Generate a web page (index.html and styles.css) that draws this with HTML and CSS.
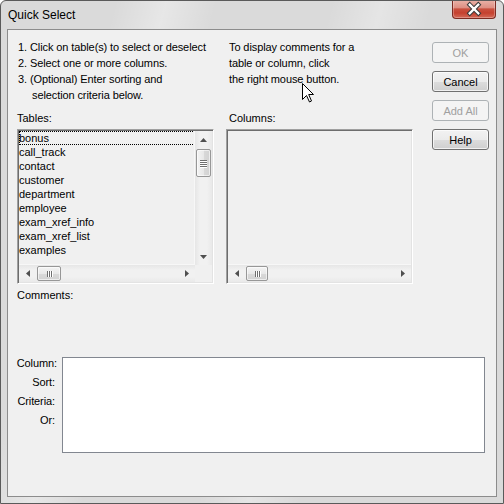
FILE: index.html
```html
<!DOCTYPE html>
<html>
<head>
<meta charset="utf-8">
<title>Quick Select</title>
<link rel="stylesheet" href="styles.css">
</head>
<body>
<div class="window">
  <div class="titlebar">
    <span class="title">Quick Select</span>
    <div class="close">
      <svg width="44" height="19" viewBox="0 0 44 19">
        <path d="M17.5 5.5 L26.5 14.5 M26.5 5.5 L17.5 14.5" stroke="#3b3b3b" stroke-width="4.6" stroke-linecap="square" fill="none"/>
        <path d="M17.5 5.5 L26.5 14.5 M26.5 5.5 L17.5 14.5" stroke="#ffffff" stroke-width="2.4" stroke-linecap="square" fill="none"/>
      </svg>
    </div>
  </div>
  <div class="client">
    <div class="top">
      <div class="col left">
        <div class="intro steps">
          <div class="step"><span class="num">1.</span><span>Click on table(s) to select or deselect</span></div>
          <div class="step"><span class="num">2.</span><span>Select one or more columns.</span></div>
          <div class="step"><span class="num">3.</span><span>(Optional) Enter sorting and<br><span class="cont">selection criteria below.</span></span></div>
        </div>
        <div class="label">Tables:</div>
        <div class="listbox tables">
          <ul class="items">
            <li class="focus">bonus</li>
            <li>call_track</li>
            <li>contact</li>
            <li>customer</li>
            <li>department</li>
            <li>employee</li>
            <li>exam_xref_info</li>
            <li>exam_xref_list</li>
            <li>examples</li>
          </ul>
          <div class="vscroll">
            <div class="sb-btn"><svg width="7" height="4" viewBox="0 0 7 4"><polygon points="0,4 7,4 3.5,0" fill="#505050"/></svg></div>
            <div class="thumb vthumb"><span class="grip-h"></span><span class="grip-h"></span><span class="grip-h"></span><span class="grip-h"></span></div>
            <div class="track"></div>
            <div class="sb-btn"><svg width="7" height="4" viewBox="0 0 7 4"><polygon points="0,0 7,0 3.5,4" fill="#505050"/></svg></div>
          </div>
          <div class="hscroll">
            <div class="sb-btn"><svg width="4" height="7" viewBox="0 0 4 7"><polygon points="4,0 4,7 0,3.5" fill="#505050"/></svg></div>
            <div class="thumb hthumb"><span class="grip-v"></span><span class="grip-v"></span><span class="grip-v"></span></div>
            <div class="track"></div>
            <div class="sb-btn"><svg width="4" height="7" viewBox="0 0 4 7"><polygon points="0,0 0,7 4,3.5" fill="#505050"/></svg></div>
          </div>
          <div class="corner"></div>
        </div>
      </div>
      <div class="col mid">
        <div class="intro hint">To display comments for a<br>table or column, click<br>the right mouse button.</div>
        <div class="label indent">Columns:</div>
        <div class="listbox columns">
          <div class="empty"></div>
          <div class="hscroll">
            <div class="sb-btn"><svg width="4" height="7" viewBox="0 0 4 7"><polygon points="4,0 4,7 0,3.5" fill="#505050"/></svg></div>
            <div class="thumb hthumb narrow"><span class="grip-v"></span><span class="grip-v"></span><span class="grip-v"></span></div>
            <div class="track"></div>
            <div class="sb-btn"><svg width="4" height="7" viewBox="0 0 4 7"><polygon points="0,0 0,7 4,3.5" fill="#505050"/></svg></div>
          </div>
        </div>
      </div>
      <div class="buttons">
        <button class="btn" disabled>OK</button>
        <button class="btn">Cancel</button>
        <button class="btn" disabled>Add All</button>
        <button class="btn">Help</button>
      </div>
    </div>
    <div class="comments">Comments:</div>
    <div class="criteria">
      <div class="crit-labels">
        <span class="first">Column:</span>
        <span>Sort:</span>
        <span>Criteria:</span>
        <span>Or:</span>
      </div>
      <div class="crit-box"></div>
    </div>
  </div>
  <svg class="cursor" width="13" height="20" viewBox="0 0 13 20">
    <path d="M0.5 0.5 L0.5 16.5 L4.5 12.5 L7.5 19 L9.5 18 L6.7 11.5 L11.5 11.5 Z" fill="#ffffff" stroke="#000000" stroke-width="1" stroke-linejoin="miter"/>
  </svg>
</div>
</body>
</html>
```

FILE: styles.css
```css
html, body {
  margin: 0;
  padding: 0;
  background: #ffffff;
}

body {
  font-family: "Liberation Sans", Arial, sans-serif;
  font-size: 11px;
  color: #000000;
}

.window {
  position: relative;
  width: 504px;
  height: 504px;
  box-sizing: border-box;
  border: 1px solid #5a5a5a;
  border-radius: 6px 6px 0 0;
  padding: 0 6px 6px;
  display: flex;
  flex-direction: column;
  background:
    linear-gradient(105deg, rgba(255,255,255,0) 18%, rgba(255,255,255,0.35) 26%, rgba(255,255,255,0) 34%, rgba(255,255,255,0) 52%, rgba(255,255,255,0.3) 60%, rgba(255,255,255,0) 68%),
    #dadada;
  overflow: hidden;
}

.titlebar {
  height: 28px;
  display: flex;
  align-items: flex-start;
  flex: none;
}

.title {
  margin: 7px 0 0 1px;
  font-size: 12px;
  line-height: 15px;
  color: #000;
}

.close {
  margin: -1px 1px 0 auto;
  width: 44px;
  height: 19px;
  box-sizing: border-box;
  border: 1px solid #7c2b22;
  border-top: none;
  border-radius: 0 0 4px 4px;
  background: linear-gradient(#eab3a9 0%, #de9084 42%, #c9503f 50%, #c5412f 72%, #d46a58 100%);
  box-shadow: inset 0 0 0 1px rgba(255,255,255,0.28);
  display: flex;
  align-items: center;
  justify-content: center;
  overflow: hidden;
}

.close svg {
  display: block;
  margin-top: -1px;
}

.client {
  flex: 1;
  border: 1px solid #8c8c8c;
  background: #f0f0f0;
  padding: 9px 0 0 9px;
}

.top {
  display: flex;
  align-items: flex-start;
  gap: 12px;
}

.col.left { width: 197px; }
.col.mid { width: 187px; }

.intro {
  height: 64px;
  line-height: 16px;
  letter-spacing: -0.1px;
}

.steps { padding-left: 1px; }

.step { display: flex; }

.num {
  width: 12px;
  flex: none;
}

.cont { padding-left: 2px; }

.hint { padding-left: 3px; }

.label {
  margin-top: 7px;
  line-height: 16px;
}

.label.indent { padding-left: 3px; }

.listbox {
  margin-top: 3px;
  height: 155px;
  box-sizing: border-box;
  border: 1px solid;
  border-color: #a0a0a0 #ffffff #ffffff #a0a0a0;
  box-shadow: inset 1px 1px #6d6d6d, inset -1px -1px #e3e3e3;
  padding: 1px;
  background: #f0f0f0;
  display: grid;
}

.listbox.tables {
  grid-template-columns: 1fr 17px;
  grid-template-rows: 1fr 17px;
}

.listbox.columns {
  grid-template-columns: 1fr;
  grid-template-rows: 1fr 17px;
}

.items {
  list-style: none;
  margin: 0;
  padding: 0;
  min-width: 0;
}

.items li {
  height: 14px;
  line-height: 14px;
  white-space: nowrap;
}

.items li.focus {
  outline: 1px dotted #000;
  outline-offset: -1px;
}

.vscroll {
  display: flex;
  flex-direction: column;
  background: linear-gradient(to right, #e6e6e6, #f1f1f1 30%, #f1f1f1 70%, #e9e9e9);
  border-left: 1px solid #f7f7f7;
  margin-left: -1px;
}

.hscroll {
  display: flex;
  background: linear-gradient(#e6e6e6, #f1f1f1 30%, #f1f1f1 70%, #e9e9e9);
  border-top: 1px solid #f7f7f7;
  margin-top: -1px;
}

.sb-btn {
  width: 17px;
  height: 17px;
  flex: none;
  display: flex;
  align-items: center;
  justify-content: center;
}

.vscroll .sb-btn { width: 100%; }
.hscroll .sb-btn { height: 100%; }

.sb-btn svg { display: block; }

.track { flex: 1; }

.thumb {
  box-sizing: border-box;
  border: 1px solid #979797;
  border-radius: 2px;
  flex: none;
  display: flex;
  align-items: center;
  justify-content: center;
  box-shadow: inset 0 0 0 1px rgba(255,255,255,0.6);
}

.vthumb {
  height: 28px;
  margin: 1px 1px 0;
  flex-direction: column;
  gap: 1px;
  background: linear-gradient(to right, #f4f4f4, #e8e8e8 50%, #d9d9d9 51%, #d2d2d2);
}

.hthumb {
  width: 24px;
  margin: 1px 0 1px 1px;
  gap: 1px;
  background: linear-gradient(#f4f4f4, #e8e8e8 50%, #d9d9d9 51%, #d2d2d2);
}

.hthumb.narrow { width: 22px; }

.grip-h {
  width: 7px;
  height: 1px;
  background: #6f6f6f;
  box-shadow: 0 1px #ffffff;
}

.grip-v {
  width: 1px;
  height: 6px;
  background: #6f6f6f;
  box-shadow: 1px 0 #ffffff;
}

.corner {
  background: #f0f0f0;
}

.empty { min-height: 0; }

.buttons {
  display: flex;
  flex-direction: column;
  gap: 8px;
  margin: 3px 0 0 7px;
}

.btn {
  width: 57px;
  height: 21px;
  box-sizing: border-box;
  padding: 0;
  border: 1px solid #707070;
  border-radius: 3px;
  font-family: "Liberation Sans", Arial, sans-serif;
  font-size: 11px;
  color: #000;
  background: linear-gradient(#f2f2f2 0%, #ebebeb 50%, #dddddd 51%, #cfcfcf 100%);
  box-shadow: inset 0 0 0 1px rgba(255,255,255,0.7);
}

.btn:disabled {
  border-color: #adb2b5;
  color: #a0a0a0;
  background: #f4f4f4;
  box-shadow: none;
}

.comments {
  margin-top: 3px;
  line-height: 16px;
}

.criteria {
  margin-top: 51px;
  display: flex;
  gap: 7px;
  align-items: flex-start;
}

.crit-labels {
  width: 38px;
  display: flex;
  flex-direction: column;
  align-items: flex-end;
  line-height: 19px;
  letter-spacing: -0.1px;
}

.crit-labels .first { margin-right: -2px; }

.crit-box {
  margin-top: 3px;
  width: 423px;
  height: 96px;
  box-sizing: border-box;
  border: 1px solid #828790;
  background: #ffffff;
}

.cursor {
  position: absolute;
  left: 301px;
  top: 82px;
}
```
